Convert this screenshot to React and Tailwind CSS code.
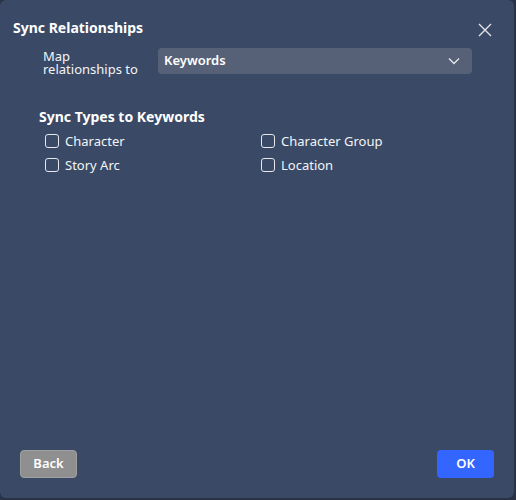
export default function App() {
  const items = ['Character', 'Character Group', 'Story Arc', 'Location']
  return (
    <div className="w-[516px] h-[500px] bg-[#2a3346]" style={{ fontFamily: '"Noto Sans", sans-serif' }}>
      <div className="w-[514px] h-[498px] bg-[#3a4a66] rounded-md flex flex-col text-white">
        <div className="flex items-center justify-between pl-[13px] pr-[22px] pt-[18px]">
          <h1 className="text-[14px] font-bold leading-5">Sync Relationships</h1>
          <svg width="14" height="14" viewBox="0 0 14 14" stroke="#e5e7eb" strokeWidth="1.3" className="mt-1">
            <path d="M1 1l12 12M13 1L1 13" />
          </svg>
        </div>
        <div className="flex items-start pl-[43px] pr-[42px] mt-[10px]">
          <div className="w-[115px] text-[13px] leading-[13px] text-gray-100 pt-[2px]">Map<br />relationships to</div>
          <div className="flex-1 h-[26px] bg-[#566178] rounded flex items-center justify-between pl-[6px] pr-[12px]">
            <span className="text-[13px] font-semibold">Keywords</span>
            <svg width="12" height="8" viewBox="0 0 12 8" fill="none" stroke="#e5e7eb" strokeWidth="1.3"><path d="M1 1.5l5 5 5-5" /></svg>
          </div>
        </div>
        <div className="pl-[39px] mt-[31px]">
          <h2 className="text-[14px] font-bold leading-5">Sync Types to Keywords</h2>
          <div className="grid grid-cols-[216px_1fr] gap-y-[6px] pl-[6px] mt-[5px]">
            {items.map(t => (
              <label key={t} className="flex items-center gap-[6px] text-[13px] leading-[18px] text-gray-100">
                <span className="w-[14px] h-[14px] border border-gray-200 rounded-[3px]" />
                {t}
              </label>
            ))}
          </div>
        </div>
        <div className="flex-1" />
        <div className="flex justify-between pl-[20px] pr-[20px] pb-[20px]">
          <button className="w-[57px] h-[28px] bg-[#8f8f8f] border border-[#a0a0a0] rounded text-[13px] font-semibold">Back</button>
          <button className="w-[57px] h-[28px] bg-[#3366ff] rounded text-[13px] font-semibold">OK</button>
        </div>
      </div>
    </div>
  )
}
